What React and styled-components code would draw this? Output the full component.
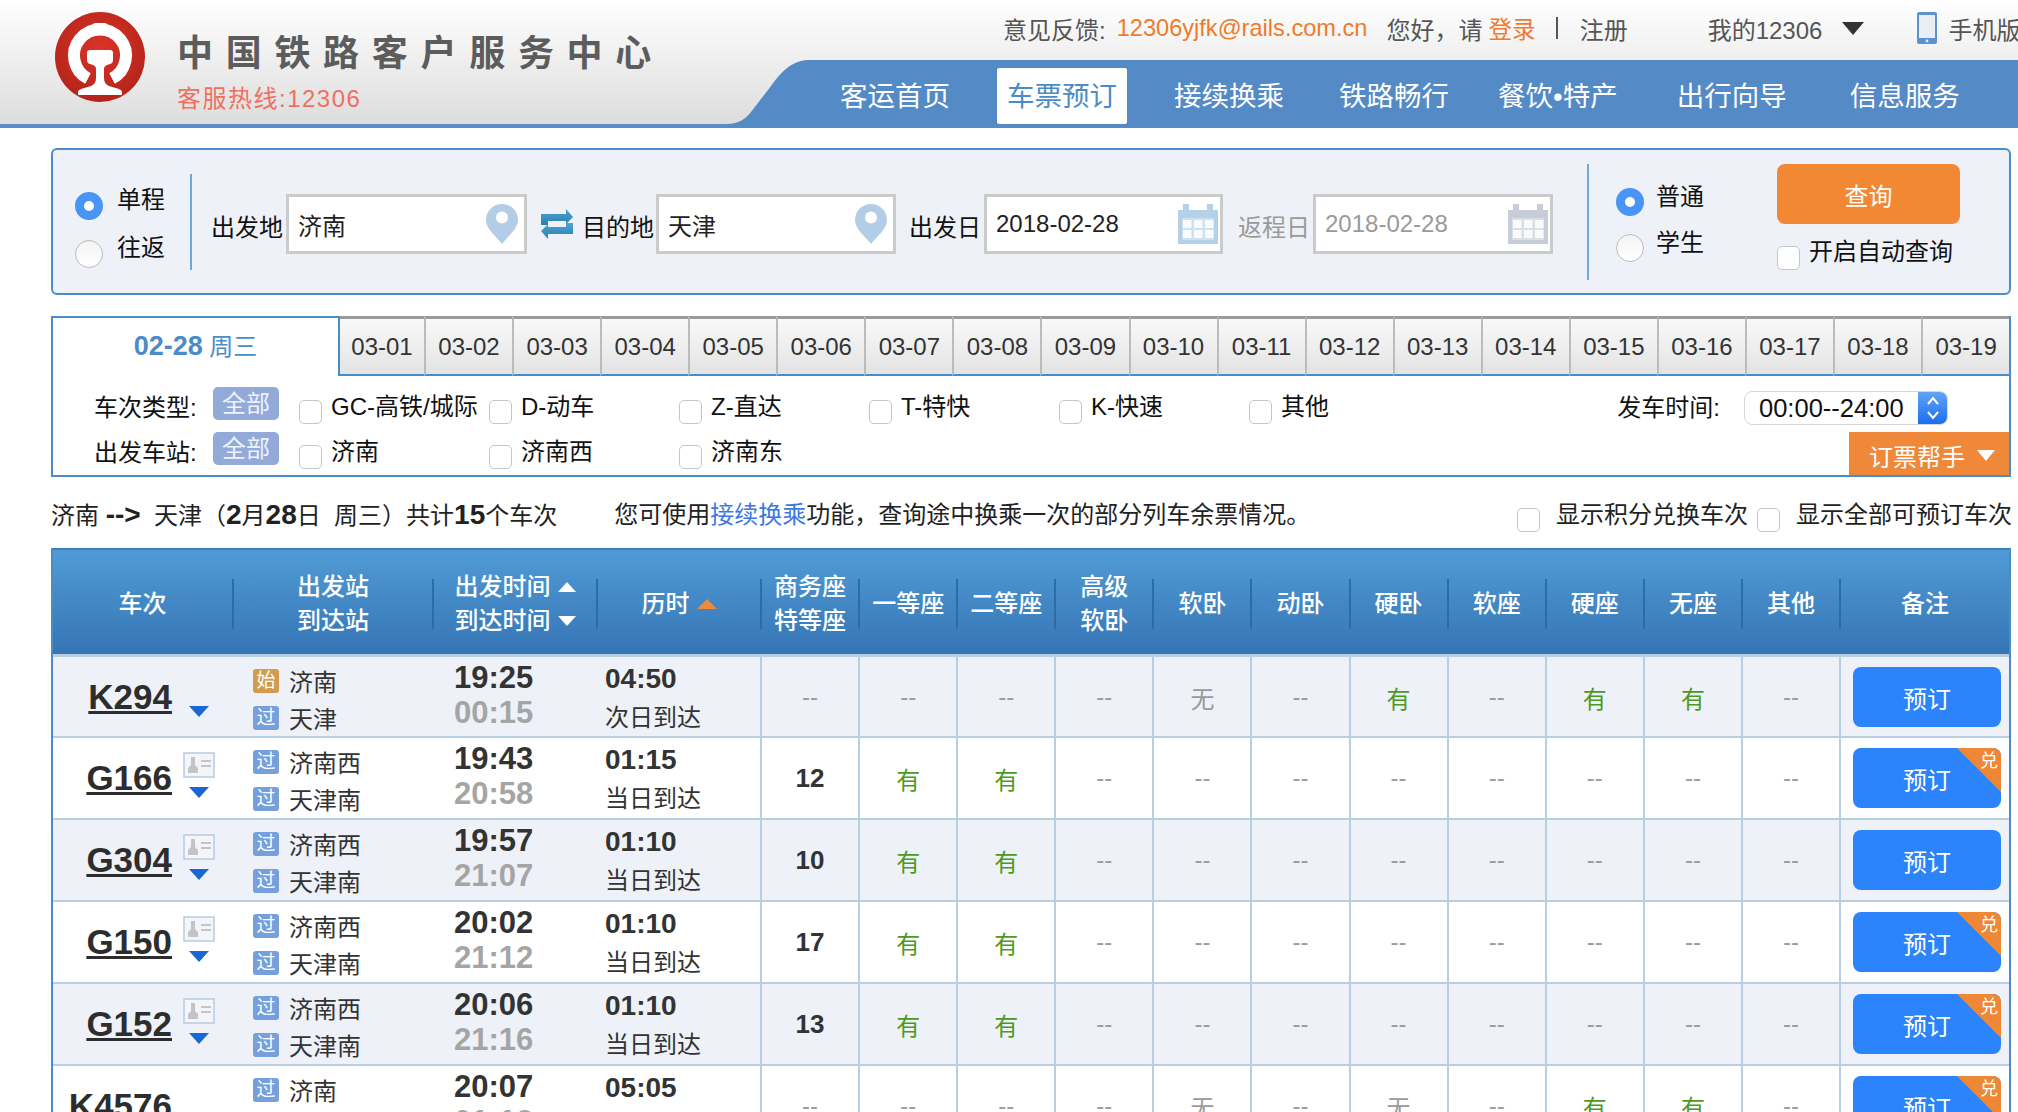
import styled, { createGlobalStyle } from "styled-components";

const BLUE = "#4a8cc8";
const LINE = "#b7cfe0";
const FONT = `"Liberation Sans", "Noto Sans CJK SC", sans-serif`;

const navItems = [
  { label: "客运首页", gap: 37 },
  { label: "车票预订", gap: 37 },
  { label: "接续换乘", gap: 35 },
  { label: "铁路畅行", gap: 29 },
  { label: "餐饮•特产", gap: 39 },
  { label: "出行向导", gap: 43 },
  { label: "信息服务", gap: 0 },
];

const dates = [
  "03-01", "03-02", "03-03", "03-04", "03-05", "03-06", "03-07", "03-08", "03-09", "03-10",
  "03-11", "03-12", "03-13", "03-14", "03-15", "03-16", "03-17", "03-18", "03-19",
];

const seatHeaders = [
  ["商务座", "特等座"], ["一等座"], ["二等座"], ["高级", "软卧"], ["软卧"], ["动卧"],
  ["硬卧"], ["软座"], ["硬座"], ["无座"], ["其他"],
];

const dashes = (n) => Array(n).fill("--");

const trains = [
  {
    no: "K294", from: "济南", to: "天津", fromType: "始", dep: "19:25", arr: "00:15", dur: "04:50", day: "次日到达",
    seats: ["--", "--", "--", "--", "无", "--", "有", "--", "有", "有", "--"],
  },
  {
    no: "G166", from: "济南西", to: "天津南", fromType: "过", dep: "19:43", arr: "20:58", dur: "01:15", day: "当日到达",
    seats: ["12", "有", "有", ...dashes(8)], card: true, points: true,
  },
  {
    no: "G304", from: "济南西", to: "天津南", fromType: "过", dep: "19:57", arr: "21:07", dur: "01:10", day: "当日到达",
    seats: ["10", "有", "有", ...dashes(8)], card: true,
  },
  {
    no: "G150", from: "济南西", to: "天津南", fromType: "过", dep: "20:02", arr: "21:12", dur: "01:10", day: "当日到达",
    seats: ["17", "有", "有", ...dashes(8)], card: true, points: true,
  },
  {
    no: "G152", from: "济南西", to: "天津南", fromType: "过", dep: "20:06", arr: "21:16", dur: "01:10", day: "当日到达",
    seats: ["13", "有", "有", ...dashes(8)], card: true, points: true,
  },
  {
    no: "K4576", from: "济南", to: "天津", fromType: "过", dep: "20:07", arr: "01:12", dur: "05:05", day: "次日到达",
    seats: ["--", "--", "--", "--", "无", "--", "无", "--", "有", "有", "--"], points: true,
  },
];

function RailLogo() {
  return (
    <svg width="90" height="90" viewBox="0 0 90 90">
      <defs>
        <radialGradient id="logoRed" cx="50%" cy="40%" r="60%">
          <stop offset="0%" stopColor="#dc3328" />
          <stop offset="100%" stopColor="#b3241a" />
        </radialGradient>
      </defs>
      <circle cx="45" cy="45" r="45" fill="url(#logoRed)" />
      <path d="M33 66.5 A26 26 0 1 1 57 66.5" fill="none" stroke="#fff" strokeWidth="12" />
      <rect x="38" y="11" width="14" height="7" rx="2" fill="#fff" />
      <path d="M35 38 H55 Q58 38 58 41 V48 Q58 51 55 52 L52 53 Q49 54 49 57 V66 Q49 72 54 74 L64 77 Q67 78 67 80 V83 H23 V80 Q23 78 26 77 L36 74 Q41 72 41 66 V57 Q41 54 38 53 L35 52 Q32 51 32 48 V41 Q32 38 35 38Z" fill="#fff" />
    </svg>
  );
}

function NavSlant() {
  return (
    <svg width="81" height="68" viewBox="0 0 81 68">
      <path d="M0 64 C10 64 18 60 24 52 L44 26 C54 12 64 1 81 0 V68 H0 Z" fill="#548ac6" />
    </svg>
  );
}

function PhoneIcon() {
  return (
    <svg width="20" height="32" viewBox="0 0 20 32">
      <rect width="20" height="32" rx="2" fill="#5b93d0" />
      <rect x="2" y="3" width="16" height="23" fill="#e9eef5" />
      <circle cx="10" cy="29" r="1.4" fill="#dce8f5" />
    </svg>
  );
}

function PinIcon() {
  return (
    <svg width="32" height="40" viewBox="0 0 32 40">
      <path d="M16 0 C7 0 0 7 0 16 C0 25 10 32 16 40 C22 32 32 25 32 16 C32 7 25 0 16 0Z" fill="#b2cde5" />
      <circle cx="16" cy="13.5" r="6" fill="#fff" />
    </svg>
  );
}

function CalendarIcon({ color }) {
  return (
    <svg width="40" height="40" viewBox="0 0 40 40">
      <path d="M0 6 H5 V0 H11 V6 H29 V0 H35 V6 H40 V40 H0 Z" fill={color} />
      <rect x="4" y="14" width="32" height="22" fill="#fff" opacity="0.35" />
      {[5, 16, 27].map((x) =>
        [16, 26].map((y) => <rect key={`${x}-${y}`} x={x} y={y} width="8.5" height="8" fill="#fff" opacity="0.85" />)
      )}
    </svg>
  );
}

function SwapIcon() {
  return (
    <svg width="32" height="30" viewBox="0 0 32 30">
      <defs>
        <linearGradient id="swapBlue" x1="0" y1="0" x2="0" y2="1">
          <stop offset="0%" stopColor="#4da3d2" />
          <stop offset="100%" stopColor="#2a7fb0" />
        </linearGradient>
      </defs>
      <path d="M0 16 V5 H25 V0 L32 8 L25 15 V12 H7 V16 Z" fill="url(#swapBlue)" />
      <path d="M32 14 V25 H7 V30 L0 22 L7 15 V18 H25 V14 Z" fill="url(#swapBlue)" />
    </svg>
  );
}

function IdCardIcon() {
  return (
    <svg width="32" height="26" viewBox="0 0 32 26">
      <rect x="1" y="1" width="30" height="24" fill="#f3f5f8" stroke="#b5cbe5" strokeWidth="1.5" />
      <path d="M8 5 h4 v7 q0 2 2 3 l1 1 v5 h-10 v-5 l1 -1 q2 -1 2 -3z" fill="#c4c4c4" />
      <rect x="18" y="8" width="10" height="2" fill="#c4c4c4" />
      <rect x="18" y="13" width="10" height="2" fill="#c4c4c4" />
    </svg>
  );
}

function SelectArrows() {
  return (
    <svg width="14" height="26" viewBox="0 0 14 26" fill="none" stroke="#fff" strokeWidth="2">
      <path d="M2 9 L7 3 L12 9" />
      <path d="M2 17 L7 23 L12 17" />
    </svg>
  );
}

export default function App() {
  return (
    <>
      <GlobalStyle />
      <Header>
        <Brand>
          <RailLogo />
          <BrandText>
            <BrandTitle>中国铁路客户服务中心</BrandTitle>
            <Hotline>客服热线:12306</Hotline>
          </BrandText>
        </Brand>
        <HeaderRight>
          <TopBar>
            <TopItem>意见反馈:</TopItem>
            <TopItem $gap={11} $accent>12306yjfk@rails.com.cn</TopItem>
            <TopItem $gap={19}>您好，请</TopItem>
            <TopItem $gap={6} $accent>登录</TopItem>
            <TopSep />
            <TopItem $gap={22}>注册</TopItem>
            <TopItem $gap={80}>我的12306</TopItem>
            <Triangle $dir="down" $w={22} $h={13} $color="#333" $ml={20} />
            <PhoneSlot><PhoneIcon /></PhoneSlot>
            <TopItem $gap={11}>手机版</TopItem>
          </TopBar>
          <NavRow>
            <NavSlant />
            <NavBar>
              {navItems.map((item) => (
                <NavItem key={item.label} $active={item.label === "车票预订"} $gap={item.gap}>{item.label}</NavItem>
              ))}
            </NavBar>
          </NavRow>
        </HeaderRight>
      </Header>

      <Main>
        <SearchPanel>
          <TripGroup>
            <TripOption><RadioInput name="trip" defaultChecked />单程</TripOption>
            <TripOption><RadioInput name="trip" />往返</TripOption>
          </TripGroup>
          <PanelDivider $top={24} $height={96} />
          <FieldRow>
            <FieldLabel $width={75}>出发地</FieldLabel>
            <TextField $width={241}>济南<PinIcon /></TextField>
            <SwapSlot><SwapIcon /></SwapSlot>
            <FieldLabel $width={74}>目的地</FieldLabel>
            <TextField $width={240}>天津<PinIcon /></TextField>
            <FieldLabel $width={75} $gap={13}>出发日</FieldLabel>
            <TextField $width={239}>2018-02-28<CalSlot><CalendarIcon color="#b5d1e9" /></CalSlot></TextField>
            <FieldLabel $width={75} $gap={15} $muted>返程日</FieldLabel>
            <TextField $width={240} $muted>2018-02-28<CalSlot><CalendarIcon color="#c6ccd8" /></CalSlot></TextField>
          </FieldRow>
          <PanelDivider $top={14} $height={116} $gap={34} />
          <TicketGroup>
            <TripOption $pitch={46}><RadioInput name="ticket" defaultChecked />普通</TripOption>
            <TripOption $pitch={46}><RadioInput name="ticket" />学生</TripOption>
          </TicketGroup>
          <SubmitColumn>
            <QueryButton>查询</QueryButton>
            <AutoQuery><CheckInput />开启自动查询</AutoQuery>
          </SubmitColumn>
        </SearchPanel>

        <FilterPanel>
          <DateTabs>
            <ActiveDate><b>02-28</b> 周三</ActiveDate>
            {dates.map((d) => <DateTab key={d}>{d}</DateTab>)}
          </DateTabs>
          <FilterRow>
            <FilterLabel>车次类型:</FilterLabel>
            <AllBadge>全部</AllBadge>
            <OptionGrid>
              {["GC-高铁/城际", "D-动车", "Z-直达", "T-特快", "K-快速", "其他"].map((o) => (
                <FilterOption key={o}><CheckInput /><OptionText>{o}</OptionText></FilterOption>
              ))}
            </OptionGrid>
            <TimeFilter>
              发车时间:
              <TimeSelect>
                00:00--24:00
                <SelectHandle><SelectArrows /></SelectHandle>
              </TimeSelect>
            </TimeFilter>
          </FilterRow>
          <FilterRow $second>
            <FilterLabel>出发车站:</FilterLabel>
            <AllBadge>全部</AllBadge>
            <OptionGrid>
              {["济南", "济南西", "济南东"].map((o) => (
                <FilterOption key={o}><CheckInput /><OptionText>{o}</OptionText></FilterOption>
              ))}
            </OptionGrid>
            <HelperButton>
              订票帮手
              <Triangle $dir="down" $w={18} $h={11} $color="#fff" />
            </HelperButton>
          </FilterRow>
        </FilterPanel>

        <InfoBar>
          <span>济南 <b>--&gt;</b>&nbsp; 天津（<b>2</b>月<b>28</b>日&nbsp; 周三）共计<b>15</b>个车次</span>
          <InfoHint>您可使用<a href="#transfer">接续换乘</a>功能，查询途中换乘一次的部分列车余票情况。</InfoHint>
          <InfoChecks>
            <InfoCheck><CheckInput />显示积分兑换车次</InfoCheck>
            <InfoCheck><CheckInput />显示全部可预订车次</InfoCheck>
          </InfoChecks>
        </InfoBar>

        <TrainTable>
          <TableHead>
            <HeadCell $first>车次</HeadCell>
            <HeadCell><span>出发站</span><span>到达站</span></HeadCell>
            <HeadCell>
              <SortLine>出发时间<Triangle $dir="up" $w={19} $h={10} $color="#fff" /></SortLine>
              <SortLine>到达时间<Triangle $dir="down" $w={19} $h={10} $color="#fff" /></SortLine>
            </HeadCell>
            <HeadCell><SortLine>历时<Triangle $dir="up" $w={20} $h={10} $color="#ec8a3f" /></SortLine></HeadCell>
            {seatHeaders.map((lines) => (
              <HeadCell key={lines[0]}>{lines.map((l) => <span key={l}>{l}</span>)}</HeadCell>
            ))}
            <HeadCell>备注</HeadCell>
          </TableHead>
          {trains.map((t, i) => (
            <TrainRow key={t.no} $odd={i % 2 === 0}>
              <TrainCell>
                <TrainNo href="#train">{t.no}</TrainNo>
                <TrainMarks>
                  <CardSlot>{t.card && <IdCardIcon />}</CardSlot>
                  <Triangle $dir="down" $w={20} $h={11} $color="#1a66d6" />
                </TrainMarks>
              </TrainCell>
              <StationCell>
                <StationLine><StationMark $start={t.fromType === "始"}>{t.fromType}</StationMark>{t.from}</StationLine>
                <StationLine><StationMark>过</StationMark>{t.to}</StationLine>
              </StationCell>
              <TimeCell>
                <div>{t.dep}</div>
                <ArriveTime>{t.arr}</ArriveTime>
              </TimeCell>
              <DurationCell>
                <b>{t.dur}</b>
                <div>{t.day}</div>
              </DurationCell>
              {t.seats.map((s, j) => (
                <SeatCell key={j} $kind={s === "有" ? "yes" : s === "无" ? "none" : s === "--" ? "dash" : "count"}>{s}</SeatCell>
              ))}
              <ActionCell>
                <BookButton>
                  预订
                  {t.points && <PointsCorner><span>兑</span></PointsCorner>}
                </BookButton>
              </ActionCell>
            </TrainRow>
          ))}
        </TrainTable>
      </Main>
    </>
  );
}

const GlobalStyle = createGlobalStyle`
  html, body {
    margin: 0;
    height: 1112px;
    overflow: hidden;
    background: #fff;
  }
  body {
    font-family: ${FONT};
    font-size: 24px;
    color: #222;
  }
  * {
    box-sizing: border-box;
  }
`;

const Triangle = styled.i`
  display: block;
  flex: none;
  width: 0;
  height: 0;
  margin-left: ${(p) => p.$ml || 0}px;
  border-left: ${(p) => p.$w / 2}px solid transparent;
  border-right: ${(p) => p.$w / 2}px solid transparent;
  ${(p) => (p.$dir === "up" ? "border-bottom" : "border-top")}: ${(p) => p.$h}px solid ${(p) => p.$color};
`;

const Header = styled.header`
  display: flex;
  height: 128px;
  background: linear-gradient(#fff, #dcdcdc);
`;

const Brand = styled.div`
  display: flex;
  width: 727px;
  flex: none;
  padding: 12px 0 0 55px;
  border-bottom: 4px solid #5a8cc8;
`;

const BrandText = styled.div`
  margin-left: 32px;
  padding-top: 24px;
`;

const BrandTitle = styled.div`
  font-size: 36px;
  line-height: 36px;
  font-weight: 700;
  letter-spacing: 12.7px;
  color: #5c5c5c;
  white-space: nowrap;
`;

const Hotline = styled.div`
  margin-top: 13px;
  font-size: 24px;
  line-height: 28px;
  letter-spacing: 1.5px;
  color: #f0705f;
`;

const HeaderRight = styled.div`
  flex: 1;
  min-width: 0;
`;

const TopBar = styled.div`
  display: flex;
  align-items: center;
  height: 56px;
  margin-bottom: 4px;
  padding-left: 276px;
  color: #555;
  white-space: nowrap;
  overflow: hidden;
`;

const TopItem = styled.span`
  flex: none;
  margin-left: ${(p) => p.$gap || 0}px;
  color: ${(p) => (p.$accent ? "#ef7b2b" : "inherit")};
  ${(p) => p.$accent && "font-size: 23.6px;"}
`;

const TopSep = styled.i`
  flex: none;
  width: 2px;
  height: 22px;
  margin-left: 20px;
  background: #555;
`;

const PhoneSlot = styled.span`
  flex: none;
  display: flex;
  margin-left: 53px;
`;

const NavRow = styled.div`
  display: flex;
  height: 68px;
`;

const NavBar = styled.nav`
  flex: 1;
  display: flex;
  align-items: flex-start;
  padding: 8px 0 0 22px;
  background: #548ac6;
`;

const NavItem = styled.a`
  height: 56px;
  margin-right: ${(p) => p.$gap}px;
  padding: 0 10px;
  border-radius: 2px;
  font-size: 27.5px;
  line-height: 58px;
  white-space: nowrap;
  color: ${(p) => (p.$active ? "#4a8cc8" : "#fff")};
  background: ${(p) => (p.$active ? "#fff" : "transparent")};
`;

const Main = styled.main`
  padding: 20px 7px 0 51px;
`;

const SearchPanel = styled.section`
  display: flex;
  align-items: flex-start;
  height: 147px;
  border: 2px solid ${BLUE};
  border-radius: 6px;
  background: #eef1f8;
  color: #111;
`;

const TripGroup = styled.div`
  flex: none;
  width: 115px;
  margin: 26px 0 0 22px;
`;

const RadioInput = styled.input.attrs({ type: "radio" })`
  appearance: none;
  flex: none;
  width: 28px;
  height: 28px;
  margin: 16px 14px 0 0;
  border: 1px solid #bbb;
  border-radius: 50%;
  background: linear-gradient(#f4f4f4, #fff);

  &:checked {
    border: 9px solid #4a94f5;
    background: #fff;
  }
`;

const TripOption = styled.label`
  display: flex;
  height: ${(p) => p.$pitch || 48}px;
  line-height: ${(p) => p.$pitch || 48}px;
`;

const TicketGroup = styled.div`
  flex: none;
  width: 161px;
  margin: 24px 0 0 27px;

  ${RadioInput} {
    margin: 14px 12px 0 0;
  }
`;

const PanelDivider = styled.i`
  flex: none;
  width: 2px;
  height: ${(p) => p.$height}px;
  margin-top: ${(p) => p.$top}px;
  margin-left: ${(p) => p.$gap || 0}px;
  background: #6fa9da;
`;

const FieldRow = styled.div`
  display: flex;
  align-items: center;
  height: 60px;
  margin: 44px 0 0 19px;
`;

const FieldLabel = styled.span`
  flex: none;
  width: ${(p) => p.$width}px;
  margin-left: ${(p) => p.$gap || 0}px;
  padding-top: 3px;
  color: ${(p) => (p.$muted ? "#9a9a9a" : "inherit")};
`;

const TextField = styled.div`
  flex: none;
  display: flex;
  align-items: center;
  justify-content: space-between;
  width: ${(p) => p.$width}px;
  height: 60px;
  padding: 0 6px 0 9px;
  border: 3px solid #cbcbcb;
  background: #fff;
  color: ${(p) => (p.$muted ? "#9a9a9a" : "#222")};
`;

const CalSlot = styled.span`
  display: flex;
  margin-right: -4px;
`;

const SwapSlot = styled.span`
  flex: none;
  display: flex;
  margin: 0 9px 0 14px;
`;

const SubmitColumn = styled.div`
  flex: none;
  width: 183px;
  margin-top: 14px;
`;

const QueryButton = styled.button`
  display: block;
  width: 183px;
  height: 60px;
  border: 0;
  border-radius: 8px;
  background: #f38834;
  color: #fff;
  font: inherit;
`;

const CheckInput = styled.input.attrs({ type: "checkbox" })`
  appearance: none;
  flex: none;
  width: 23px;
  height: 24px;
  margin: 0;
  border: 1.5px solid #c6c6c6;
  border-radius: 5px;
  background: #fff;
`;

const AutoQuery = styled.label`
  display: flex;
  margin-top: 22px;
  gap: 9px;
  line-height: 12px;
  white-space: nowrap;

  ${CheckInput} {
    margin-top: 0;
  }
`;

const FilterPanel = styled.section`
  height: 161px;
  margin-top: 21px;
  border: solid ${BLUE};
  border-width: 0 2px 2px;
`;

const DateTabs = styled.div`
  display: flex;
  height: 60px;
`;

const ActiveDate = styled.div`
  flex: none;
  width: 287px;
  border-top: 2px solid ${BLUE};
  border-right: 2px solid ${BLUE};
  text-align: center;
  line-height: 56px;
  color: #4a8cc8;

  b {
    font-size: 27px;
    font-weight: 700;
  }
`;

const DateTab = styled.div`
  flex: 1;
  border-top: 3px solid #9a9a9a;
  border-bottom: 2px solid ${BLUE};
  border-left: 2px solid #bcbcbc;
  background: linear-gradient(#f9f9f9, #e3e3e3);
  text-align: center;
  line-height: 55px;
  color: #333;

  &:nth-child(2) {
    flex: none;
    width: 84px;
    border-left: 0;
  }
`;

const FilterRow = styled.div`
  display: flex;
  align-items: flex-start;
  height: ${(p) => (p.$second ? 43 : 38)}px;
  margin-top: ${(p) => (p.$second ? 7 : 11)}px;
  padding-left: 41px;
  color: #111;
`;

const FilterLabel = styled.div`
  flex: none;
  width: 119px;
  line-height: 41px;
`;

const AllBadge = styled.div`
  flex: none;
  width: 66px;
  height: 33px;
  margin-right: 20px;
  border-radius: 5px;
  background: #93aad9;
  color: #eef2fa;
  text-align: center;
  line-height: 33px;
`;

const OptionGrid = styled.div`
  flex: none;
  display: grid;
  grid-template-columns: repeat(6, 190px);
`;

const FilterOption = styled.label`
  display: flex;
  gap: 9px;
  white-space: nowrap;

  ${CheckInput} {
    margin-top: 13px;
  }
`;

const OptionText = styled.span`
  line-height: 40px;
`;

const TimeFilter = styled.div`
  display: flex;
  gap: 24px;
  margin-left: auto;
  margin-right: 61px;
  line-height: 41px;
  white-space: nowrap;
`;

const TimeSelect = styled.div`
  display: flex;
  width: 204px;
  height: 34px;
  margin-top: 4px;
  padding-left: 14px;
  overflow: hidden;
  border: 1.5px solid #d8d8d8;
  border-radius: 8px;
  background: #fff;
  font-size: 25.5px;
  line-height: 33px;
`;

const SelectHandle = styled.span`
  display: flex;
  align-items: center;
  justify-content: center;
  width: 29px;
  margin-left: auto;
  background: linear-gradient(#62a4f4, #1a6ef0);
`;

const HelperButton = styled.div`
  display: flex;
  align-items: center;
  gap: 12px;
  width: 160px;
  height: 43px;
  margin-left: auto;
  padding: 3px 0 0 20px;
  background: #f0883a;
  color: #fff;
  white-space: nowrap;
`;

const InfoBar = styled.div`
  display: flex;
  align-items: flex-start;
  height: 71px;
  padding-top: 20px;
  line-height: 36px;
  white-space: nowrap;
  color: #222;

  b {
    font-size: 28px;
    font-weight: 700;
  }
`;

const InfoHint = styled.span`
  margin-left: 57px;

  a {
    color: #3b78e7;
    text-decoration: none;
  }
`;

const InfoChecks = styled.div`
  display: flex;
  gap: 9px;
  margin-left: auto;
  margin-right: -1px;
`;

const InfoCheck = styled.label`
  display: flex;
  gap: 16px;

  ${CheckInput} {
    margin-top: 11px;
  }
`;

const TrainTable = styled.section`
  border: solid ${BLUE};
  border-width: 0 2px;
`;

const tableColumns = "179px 200px 164px 164px repeat(11, 98.1px) 1fr";

const TableHead = styled.div`
  display: grid;
  grid-template-columns: ${tableColumns};
  align-items: center;
  height: 109px;
  padding-top: 4px;
  border-top: 2px solid #3a80c0;
  border-bottom: 3px solid ${LINE};
  background: linear-gradient(#509bd6, #3675b5);
`;

const HeadCell = styled.div`
  display: flex;
  flex-direction: column;
  align-items: center;
  justify-content: center;
  height: 50px;
  border-left: ${(p) => (p.$first ? "0" : "2px solid #2f6ba6")};
  color: #fff;
  font-weight: 500;
  line-height: 34px;
  white-space: nowrap;
`;

const SortLine = styled.span`
  display: flex;
  align-items: center;
  gap: 7px;
`;

const TrainRow = styled.div`
  display: grid;
  grid-template-columns: ${tableColumns};
  height: 82px;
  border-bottom: 2px solid ${LINE};
  background: ${(p) => (p.$odd ? "#eef1f8" : "#fff")};
  color: #333;

  &:nth-child(2) {
    height: 81px;
  }
`;

const TrainCell = styled.div`
  display: flex;
`;

const TrainNo = styled.a`
  flex: none;
  width: 119px;
  padding-top: 19px;
  text-align: right;
  font-size: 35px;
  font-weight: 700;
  line-height: 42px;
  color: #2d2d2d;
  text-decoration: underline;
`;

const TrainMarks = styled.div`
  display: flex;
  flex-direction: column;
  align-items: center;
  width: 32px;
  margin-left: 11px;
  padding-top: 14px;
`;

const CardSlot = styled.div`
  display: flex;
  height: 26px;
  margin-bottom: 9px;
`;

const StationCell = styled.div`
  padding: 5px 0 0 21px;
`;

const StationLine = styled.div`
  display: flex;
  align-items: center;
  gap: 10px;
  height: 37px;
  white-space: nowrap;
`;

const StationMark = styled.i`
  flex: none;
  width: 26px;
  height: 24px;
  border-radius: 3px;
  background: ${(p) => (p.$start ? "#d19c50" : "#759fdd")};
  color: #fff;
  font-size: 19px;
  font-style: normal;
  line-height: 24px;
  text-align: center;
`;

const TimeCell = styled.div`
  padding: 3px 0 0 22px;
  font-size: 31px;
  font-weight: 700;
  line-height: 35px;
`;

const ArriveTime = styled.div`
  color: #a5a5a5;
`;

const DurationCell = styled.div`
  padding: 2px 0 0 9px;
  line-height: 39px;

  b {
    display: block;
    font-size: 28px;
  }
`;

const seatColors = { yes: "#4d9a22", none: "#9a9a9a", dash: "#9c9c9c", count: "#333" };

const SeatCell = styled.div`
  display: flex;
  align-items: center;
  justify-content: center;
  border-left: 2px solid ${LINE};
  color: ${(p) => seatColors[p.$kind]};
  font-size: ${(p) => (p.$kind === "count" ? 26 : 24)}px;
  font-weight: ${(p) => (p.$kind === "count" ? 700 : 400)};
`;

const ActionCell = styled.div`
  display: flex;
  align-items: center;
  padding: 0 8px 0 12px;
  border-left: 2px solid ${LINE};
`;

const BookButton = styled.button`
  position: relative;
  width: 100%;
  height: 60px;
  overflow: hidden;
  border: 0;
  border-radius: 8px;
  background: #2b84fb;
  color: #fff;
  font: inherit;
`;

const PointsCorner = styled.span`
  position: absolute;
  top: 0;
  right: 0;
  width: 44px;
  height: 44px;
  background: #ef8836;
  clip-path: polygon(0 0, 100% 0, 100% 100%);
  font-size: 18px;
  line-height: 20px;

  span {
    position: absolute;
    top: 3px;
    right: 3px;
  }
`;
